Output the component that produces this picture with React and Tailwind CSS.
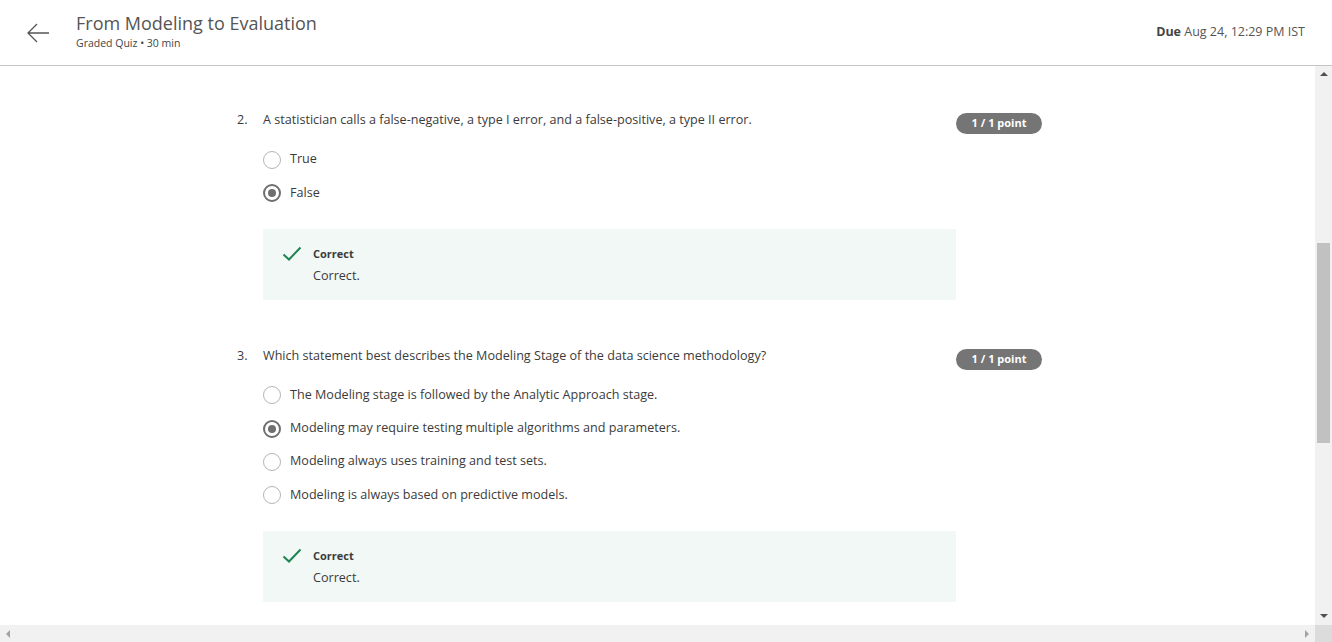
import React from 'react';

const font = { fontFamily: '"Open Sans", "Liberation Sans", sans-serif' };

const questions = [
  {
    n: 2,
    text: 'A statistician calls a false-negative, a type I error, and a false-positive, a type II error.',
    options: ['True', 'False'],
    picked: 1,
  },
  {
    n: 3,
    text: 'Which statement best describes the Modeling Stage of the data science methodology?',
    options: [
      'The Modeling stage is followed by the Analytic Approach stage.',
      'Modeling may require testing multiple algorithms and parameters.',
      'Modeling always uses training and test sets.',
      'Modeling is always based on predictive models.',
    ],
    picked: 1,
  },
];

function Radio({ on }) {
  return on ? (
    <span className="flex h-[18px] w-[18px] shrink-0 items-center justify-center rounded-full border-2 border-[#6f6f6f]">
      <span className="h-[8px] w-[8px] rounded-full bg-[#6f6f6f]" />
    </span>
  ) : (
    <span className="h-[18px] w-[18px] shrink-0 rounded-full border-[1.5px] border-[#b5b5b5]" />
  );
}

function Check() {
  return (
    <svg width="20" height="16" viewBox="0 0 20 16" fill="none" className="shrink-0">
      <path d="M1.5 8.5 L7 13.5 L18.5 1.5" stroke="#1f8354" strokeWidth="2" />
    </svg>
  );
}

function Question({ q }) {
  return (
    <div className="mb-[46px]">
      <div className="flex items-start">
        <span className="w-[26px] text-[12.6px] leading-[20px] text-[#3b3b3b]">{q.n}.</span>
        <p className="flex-1 text-[12.6px] leading-[20px] text-[#3b3b3b]">{q.text}</p>
        <span className="mt-[3px] flex h-[21px] w-[86px] items-center justify-center rounded-full bg-[#757575] text-[11px] font-bold text-white">
          1 / 1 point
        </span>
      </div>
      <div className="ml-[26px] mt-[9px]">
        {q.options.map((o, i) => (
          <div key={o} className="flex h-[33.3px] items-center gap-[9px]">
            <Radio on={i === q.picked} />
            <span className="text-[12.6px] text-[#3b3b3b]">{o}</span>
          </div>
        ))}
        <div className="mt-[19px] flex h-[71px] w-[693px] gap-[11px] bg-[#f2f8f5] pl-[19px] pt-[17px]">
          <Check />
          <div>
            <div className="text-[11px] font-bold leading-[16px] text-[#3b3b3b]">Correct</div>
            <div className="mt-[5px] text-[12.6px] leading-[18px] text-[#3b3b3b]">Correct.</div>
          </div>
        </div>
      </div>
    </div>
  );
}

export default function App() {
  return (
    <div className="flex h-[642px] w-[1332px] flex-col overflow-hidden bg-white" style={font}>
      <header className="flex h-[66px] shrink-0 items-center border-b border-[#c4c4c4] pl-[26px] pr-[27px]">
        <svg width="24" height="20" viewBox="0 0 24 20" fill="none" className="mb-[-1px]">
          <path d="M23 10 H2 M11 1 L2 10 L11 19" stroke="#555" strokeWidth="1.3" />
        </svg>
        <div className="ml-[26px] mt-[-5px]">
          <h1 className="text-[18px] leading-[26px] text-[#555]">From Modeling to Evaluation</h1>
          <p className="text-[10.5px] leading-[14px] text-[#444]">Graded Quiz • 30 min</p>
        </div>
        <div className="ml-auto text-[12.5px] text-[#555]">
          <span className="font-bold text-[#444]">Due</span> Aug 24, 12:29 PM IST
        </div>
      </header>
      <div className="flex min-h-0 flex-1">
        <main className="flex-1 overflow-hidden">
          <div className="ml-[237px] w-[805px] pt-[44px]">
            {questions.map((q) => (
              <Question key={q.n} q={q} />
            ))}
          </div>
        </main>
        <div className="flex w-[17px] flex-col items-center bg-[#f1f1f1]">
          <span className="mt-[6px] h-0 w-0 border-x-[4px] border-b-[4px] border-x-transparent border-b-[#505050]" />
          <div className="mt-[167px] h-[200px] w-[13px] bg-[#c1c1c1]" />
          <div className="flex-1" />
          <span className="mb-[7px] h-0 w-0 border-x-[4px] border-t-[4px] border-x-transparent border-t-[#505050]" />
        </div>
      </div>
      <div className="flex h-[17px] shrink-0">
        <div className="flex flex-1 items-center justify-between bg-[#f1f1f1] px-[6px]">
          <span className="h-0 w-0 border-y-[4px] border-r-[4px] border-y-transparent border-r-[#a3a3a3]" />
          <span className="h-0 w-0 border-y-[4px] border-l-[4px] border-y-transparent border-l-[#a3a3a3]" />
        </div>
        <div className="w-[17px] bg-[#dcdcdc]" />
      </div>
    </div>
  );
}
